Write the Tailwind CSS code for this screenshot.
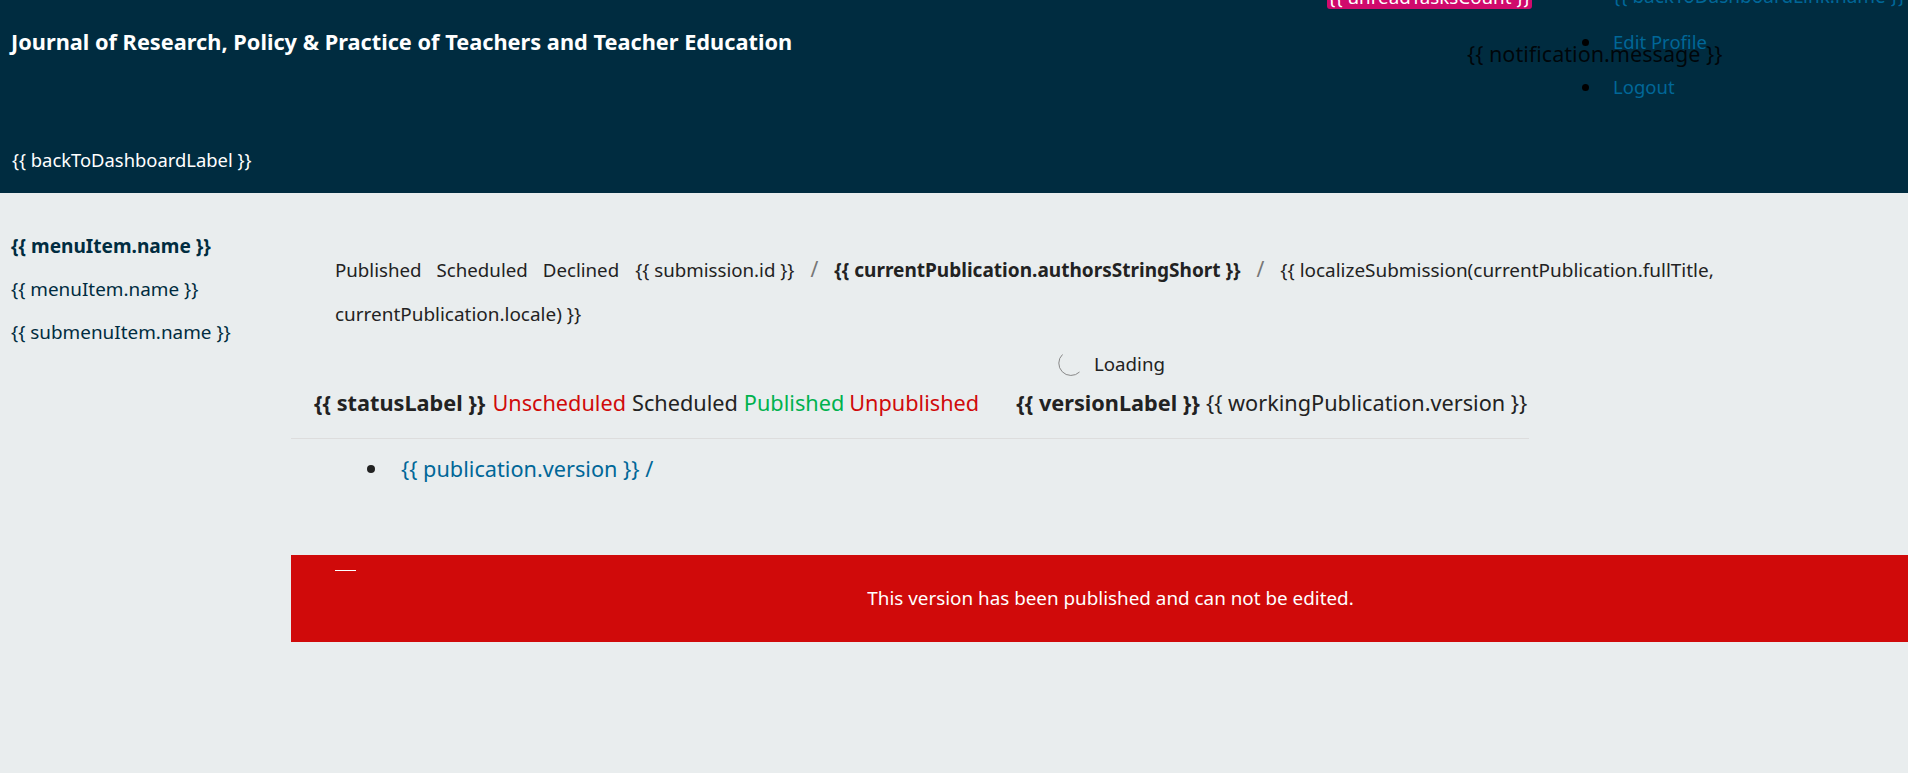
<!DOCTYPE html>
<html lang="en">
<head>
    <meta charset="UTF-8">
    <title>Workflow</title>
    <script src="https://cdn.jsdelivr.net/npm/@tailwindcss/browser@4"></script>
</head>
<body class="bg-[#e9edee] h-[773px] overflow-hidden font-['Noto_Sans',sans-serif] text-[#222222]">

    <header class="relative h-[193px] bg-[#002c40] overflow-hidden">
        <h1 class="absolute left-[11px] top-[27px] text-[21.75px] leading-[30px] font-bold text-white">Journal of Research, Policy &amp; Practice of Teachers and Teacher Education</h1>
        <a href="#" class="absolute left-[12px] top-[148px] text-[18.4px] leading-[24px] text-white">{{ backToDashboardLabel }}</a>

        <span class="absolute left-[1327px] top-[-15px] w-[205px] h-[24px] rounded-[3px] bg-[#d00a6c] text-center text-[18.8px] leading-[24px] text-white">{{ unreadTasksCount }}</span>

        <ul class="absolute left-[1582px] top-[-16px] text-[18.5px] leading-[24px] text-[#006798]">
            <li class="flex items-center gap-[24px] h-[24px] mb-[22px] text-[19px] whitespace-nowrap"><span class="w-[7px] h-[7px] rounded-full bg-black"></span>{{ backToDashboardLink.name }}</li>
            <li class="flex items-center gap-[24px] h-[24px] mb-[21px]"><span class="w-[7px] h-[7px] rounded-full bg-black"></span>Edit Profile</li>
            <li class="flex items-center gap-[24px] h-[24px]"><span class="w-[7px] h-[7px] rounded-full bg-black"></span>Logout</li>
        </ul>

        <div class="absolute left-[1467px] top-[39px] text-[21.6px] leading-[30px] text-black/85">{{ notification.message }}</div>
    </header>

    <div class="flex">
        <nav class="w-[291px] shrink-0 pl-[11px] pt-[32px] text-[18.9px] text-[#002c40]">
            <div class="h-[43px] leading-[43px] font-bold text-[19.1px]">{{ menuItem.name }}</div>
            <div class="h-[43px] leading-[43px]">{{ menuItem.name }}</div>
            <div class="h-[43px] leading-[43px]">{{ submenuItem.name }}</div>
        </nav>

        <main class="flex-1 min-w-0">
            <div class="w-[1480px] pl-[44px] pt-[55px] text-[18.7px] leading-[43px] text-[#222222]">
                <span class="mr-[15px]">Published</span><span class="mr-[15px]">Scheduled</span><span class="mr-[16px]">Declined</span>{{ submission.id }}<span class="mx-[16px] text-[21px] text-[#777777]">/</span><b class="text-[19.05px]">{{ currentPublication.authorsStringShort }}</b><span class="mx-[16px] text-[21px] text-[#777777]">/</span><span class="text-[18.95px]">{{ localizeSubmission(currentPublication.fullTitle, currentPublication.locale) }}</span>
            </div>

            <div class="w-[1238px] h-[37px] mt-[10px] flex items-center pl-[766px] text-[18.7px]">
                <svg class="w-[26px] h-[26px] mr-[11px]" viewBox="0 0 26 26" fill="none" stroke="#888888" stroke-width="1">
                    <path d="M5.5 2.5 A12 12 0 1 0 22.5 20"/>
                </svg>
                Loading
            </div>

            <div class="w-[1238px] h-[56px] pt-[5px] flex items-start whitespace-nowrap border-b border-[#dddddd] pl-[23px] text-[21.7px] leading-[30px]">
                <b>{{ statusLabel }}</b>
                <span class="ml-[7px] text-[#d00a0a]">Unscheduled</span>
                <span class="ml-[6px]">Scheduled</span>
                <span class="ml-[6px] text-[#00b24e]">Published</span>
                <span class="ml-[5px] text-[#d00a0a]">Unpublished</span>
                <b class="ml-[37px]">{{ versionLabel }}</b>
                <span class="ml-[6px]">{{ workingPublication.version }}</span>
            </div>

            <ul class="pl-[76px] pt-[15px] text-[21.7px] leading-[30px] text-[#006798]">
                <li class="flex items-center gap-[26px]"><span class="w-[8px] h-[8px] rounded-full bg-[#222222]"></span>{{ publication.version }} /</li>
            </ul>

            <div class="relative mt-[71px] h-[87px] pl-[22px] bg-[#d00a0a] flex items-center justify-center text-[18.85px] text-white">
                <span class="absolute left-[44px] top-[15px] w-[21px] h-px bg-white"></span>
                This version has been published and can not be edited.
            </div>
        </main>
    </div>
</body>
</html>
